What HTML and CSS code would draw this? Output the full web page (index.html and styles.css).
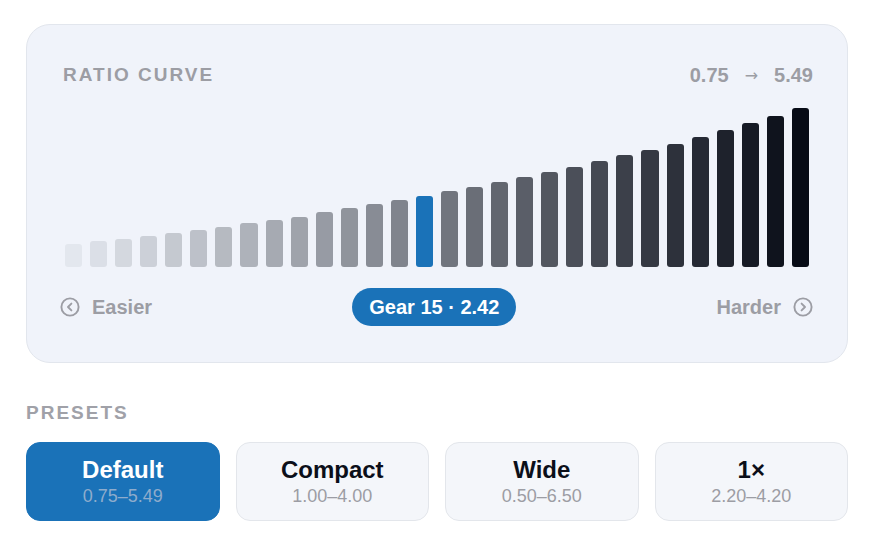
FILE: index.html
```html
<!DOCTYPE html>
<html>
<head>
<meta charset="utf-8">
<link rel="stylesheet" href="styles.css">
</head>
<body>
<div class="page">
  <section class="card">
    <header class="card-head">
      <span class="eyebrow">RATIO CURVE</span>
      <span class="range"><span>0.75</span><span class="arrow">→</span><span>5.49</span></span>
    </header>
    <div class="bars">
      <div class="bar" style="height:23px;background:#e3e7ee"></div>
      <div class="bar" style="height:26px;background:#dbdfe7"></div>
      <div class="bar" style="height:28px;background:#d4d8df"></div>
      <div class="bar" style="height:31px;background:#ccd0d8"></div>
      <div class="bar" style="height:34px;background:#c5c9d0"></div>
      <div class="bar" style="height:37px;background:#bdc1c9"></div>
      <div class="bar" style="height:40px;background:#b6bac1"></div>
      <div class="bar" style="height:44px;background:#aeb2ba"></div>
      <div class="bar" style="height:47px;background:#a6aab2"></div>
      <div class="bar" style="height:50px;background:#9fa3ab"></div>
      <div class="bar" style="height:55px;background:#979ba4"></div>
      <div class="bar" style="height:59px;background:#90949c"></div>
      <div class="bar" style="height:63px;background:#888c95"></div>
      <div class="bar" style="height:67px;background:#80848d"></div>
      <div class="bar bar-active" style="height:71px"></div>
      <div class="bar" style="height:76px;background:#71757e"></div>
      <div class="bar" style="height:80px;background:#6a6e77"></div>
      <div class="bar" style="height:85px;background:#62666f"></div>
      <div class="bar" style="height:90px;background:#5a5e68"></div>
      <div class="bar" style="height:95px;background:#535760"></div>
      <div class="bar" style="height:100px;background:#4b4f59"></div>
      <div class="bar" style="height:106px;background:#444852"></div>
      <div class="bar" style="height:112px;background:#3c404a"></div>
      <div class="bar" style="height:117px;background:#353943"></div>
      <div class="bar" style="height:123px;background:#2d313b"></div>
      <div class="bar" style="height:130px;background:#252934"></div>
      <div class="bar" style="height:137px;background:#1e222c"></div>
      <div class="bar" style="height:144px;background:#161a25"></div>
      <div class="bar" style="height:151px;background:#0f131d"></div>
      <div class="bar" style="height:159px;background:#070b16"></div>
    </div>
    <footer class="card-foot">
      <span class="nav nav-left">
        <svg class="nav-icon" viewBox="0 0 20 20" width="20" height="20"><circle cx="10" cy="10" r="8.6" fill="none" stroke="currentColor" stroke-width="1.9"/><path d="M11.4 6.6 8 10l3.4 3.4" fill="none" stroke="currentColor" stroke-width="1.9" stroke-linecap="round" stroke-linejoin="round"/></svg>
        Easier
      </span>
      <span class="pill">Gear 15 · 2.42</span>
      <span class="nav nav-right">
        Harder
        <svg class="nav-icon" viewBox="0 0 20 20" width="20" height="20"><circle cx="10" cy="10" r="8.6" fill="none" stroke="currentColor" stroke-width="1.9"/><path d="M8.6 6.6 12 10l-3.4 3.4" fill="none" stroke="currentColor" stroke-width="1.9" stroke-linecap="round" stroke-linejoin="round"/></svg>
      </span>
    </footer>
  </section>

  <div class="presets-label">PRESETS</div>
  <div class="presets">
    <button class="preset preset-active"><span class="preset-name">Default</span><span class="preset-range">0.75–5.49</span></button>
    <button class="preset"><span class="preset-name">Compact</span><span class="preset-range">1.00–4.00</span></button>
    <button class="preset"><span class="preset-name">Wide</span><span class="preset-range">0.50–6.50</span></button>
    <button class="preset"><span class="preset-name">1×</span><span class="preset-range">2.20–4.20</span></button>
  </div>
</div>
</body>
</html>
```
FILE: styles.css
```css
* { box-sizing: border-box; }
html, body { margin: 0; padding: 0; background: #ffffff; }
body {
  font-family: "Liberation Sans", Arial, sans-serif;
  color: #0b0f19;
}
.page {
  padding: 24px 26px 0 26px;
  width: 874px;
}
.card {
  background: #f0f3fa;
  border: 1px solid #e2e6ed;
  border-radius: 24px;
  padding: 36px;
}
.card-head {
  display: flex;
  justify-content: space-between;
  align-items: center;
  height: 28px;
}
.eyebrow {
  font-size: 19px;
  font-weight: 700;
  letter-spacing: 2px;
  color: #9c9da4;
}
.range {
  display: flex;
  align-items: center;
  gap: 16px;
  font-size: 20px;
  font-weight: 700;
  color: #9c9da4;
  margin-right: -2px;
}
.range .arrow { font-size: 16px; font-family: "DejaVu Sans", sans-serif; font-weight: 400; }
.bars {
  margin-top: 18px;
  height: 160px;
  display: flex;
  align-items: flex-end;
  gap: 8px;
  padding: 0 2px;
}
.bar {
  flex: 1;
  border-radius: 3px;
}
.bar-active { background: #1a72b8; }
.card-foot {
  margin-top: 21px;
  display: flex;
  justify-content: space-between;
  align-items: center;
}
.nav {
  display: flex;
  align-items: center;
  gap: 12px;
  font-size: 20px;
  font-weight: 700;
  color: #9c9da4;
}
.nav-left { margin-left: -3px; }
.nav-right { margin-right: -2px; }
.nav-icon { color: #9c9da4; display: block; }
.pill {
  height: 38px;
  display: flex;
  align-items: center;
  padding: 0 17px;
  border-radius: 19px;
  background: #1a72b8;
  color: #ffffff;
  font-size: 20px;
  font-weight: 700;
}
.presets-label {
  margin-top: 38px;
  line-height: 24px;
  font-size: 19px;
  font-weight: 700;
  letter-spacing: 2px;
  color: #a0a1a8;
}
.presets {
  margin-top: 17px;
  display: grid;
  grid-template-columns: repeat(4, 1fr);
  gap: 16px;
}
.preset {
  height: 79px;
  display: flex;
  flex-direction: column;
  align-items: center;
  justify-content: center;
  gap: 3px;
  border: 1px solid #e3e6eb;
  border-radius: 14px;
  background: #f4f6fa;
  font-family: inherit;
  padding: 0;
  cursor: pointer;
}
.preset-name {
  font-size: 24px;
  font-weight: 700;
  line-height: 26px;
  color: #0b0f19;
}
.preset-range {
  font-size: 18px;
  font-weight: 400;
  line-height: 20px;
  color: #9c9da4;
}
.preset-active {
  background: #1a72b8;
  border-color: #1a72b8;
}
.preset-active .preset-name { color: #ffffff; }
.preset-active .preset-range { color: #8eaccc; }
```
